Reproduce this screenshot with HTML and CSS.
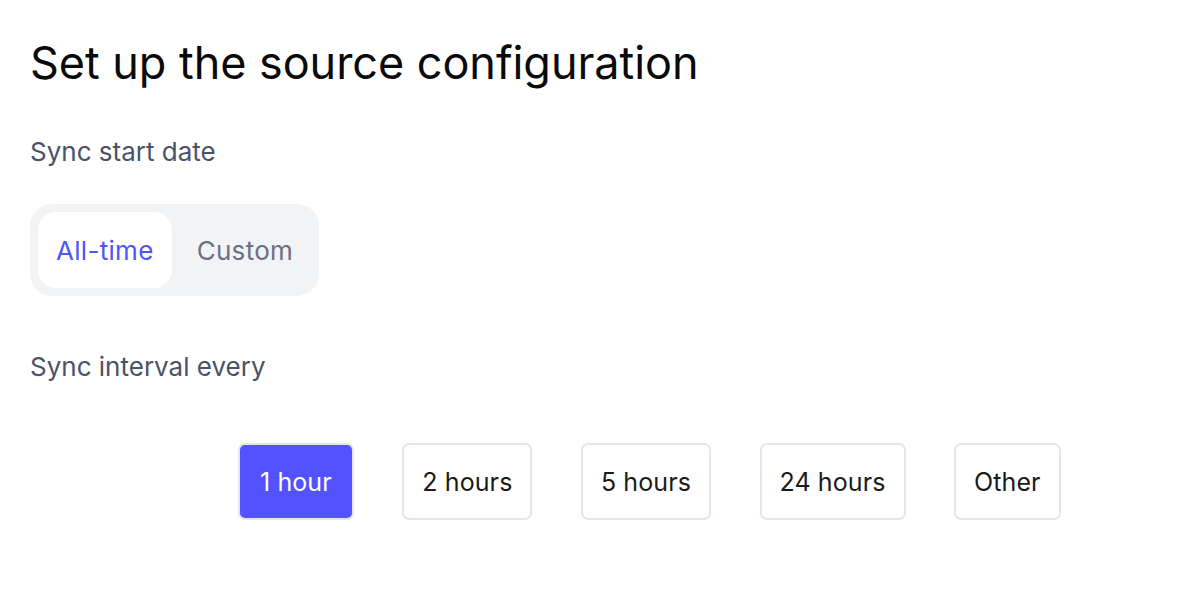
FILE: index.html
```html
<!DOCTYPE html>
<html lang="en">
<head>
    <meta charset="UTF-8">
    <meta name="viewport" content="width=device-width, initial-scale=1.0">
    <title>Source configuration</title>
    <link rel="stylesheet" href="styles.css">
</head>
<body>
    <div class="page">
        <h1 class="title">Set up the source configuration</h1>

        <div class="field start-date">
            <div class="label">Sync start date</div>
            <div class="segmented">
                <button class="segment active">All-time</button>
                <button class="segment">Custom</button>
            </div>
        </div>

        <div class="field sync-interval">
            <div class="label">Sync interval every</div>
            <div class="intervals">
                <button class="interval selected">1 hour</button>
                <button class="interval">2 hours</button>
                <button class="interval">5 hours</button>
                <button class="interval">24 hours</button>
                <button class="interval">Other</button>
            </div>
        </div>
    </div>
</body>
</html>
```

FILE: styles.css
```css
body, html {
    margin: 0;
    padding: 0;
    background: #ffffff;
    font-family: Inter, "Noto Sans", sans-serif;
}
.page {
    padding: 30px 30px 0 30px;
}
.title {
    margin: 0;
    font-size: 45px;
    font-weight: 400;
    line-height: 66px;
    color: #0a0a0a;
    letter-spacing: -0.05px;
}
.field.start-date {
    margin-top: 40px;
}
.field.sync-interval {
    margin-top: 55px;
}
.label {
    font-size: 26px;
    line-height: 32px;
    color: #4a5268;
}
/* All-time / Custom toggle */
.segmented {
    display: inline-flex;
    gap: 7px;
    margin-top: 36px;
    padding: 8px;
    background: #f2f3f5;
    border-radius: 22px;
}
.segment {
    font-family: inherit;
    font-size: 26px;
    letter-spacing: 0.3px;
    height: 76px;
    padding: 0 18px;
    border: none;
    border-radius: 18px;
    background: none;
    color: #6b7085;
    cursor: pointer;
}
.segment.active {
    background: #ffffff;
    color: #4f55f7;
}
/* interval buttons */
.intervals {
    display: flex;
    gap: 48.5px;
    margin-top: 60px;
    padding-left: 208px;
}
.interval {
    font-family: inherit;
    font-size: 25px;
    letter-spacing: 0.1px;
    height: 77px;
    padding: 0 18px;
    border: 2px solid #e3e5f0;
    border-radius: 7px;
    background: #ffffff;
    color: #1a1a1a;
    cursor: pointer;
}
.interval.selected {
    background: #5252ff;
    border-color: #e3e5f0;
    color: #ffffff;
    padding: 0 20px;
}
```
